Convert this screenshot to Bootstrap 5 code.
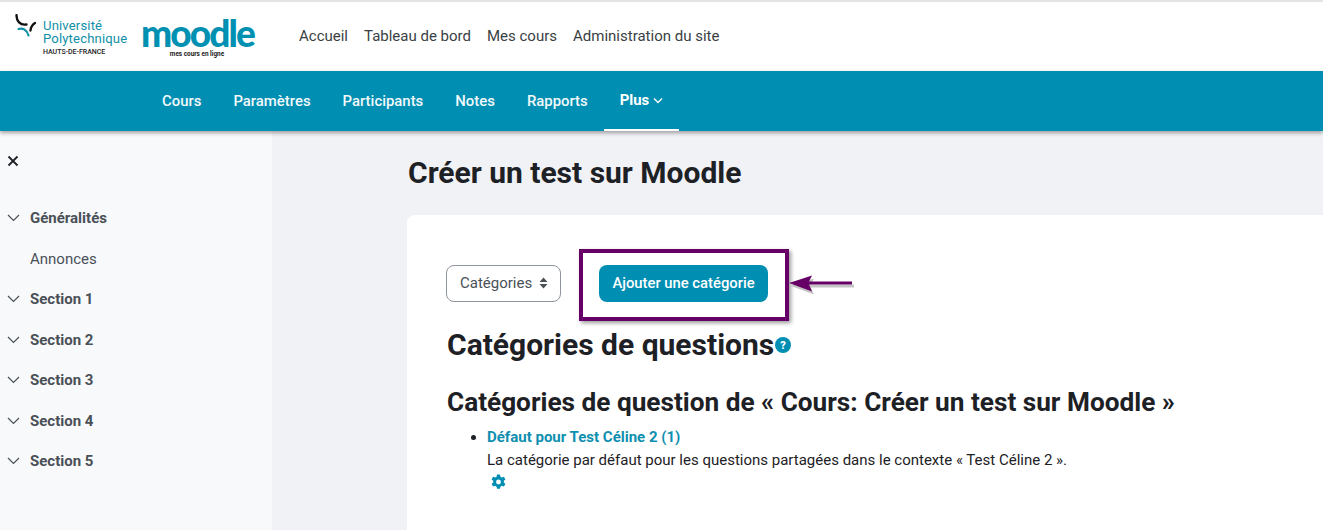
<!DOCTYPE html>
<html lang="fr">
<head>
<meta charset="utf-8">
<title>Créer un test sur Moodle</title>
<link href="https://cdn.jsdelivr.net/npm/bootstrap@5.3.0/dist/css/bootstrap.min.css" rel="stylesheet">
<style>
html,body{height:530px;overflow:hidden}
body{font-family:Roboto,"Liberation Sans",sans-serif;font-size:15px;color:#1d2125;background:#f1f2f6}
.topbar{height:71px;background:#fff;border-top:2px solid #e4e4e4;padding-left:15px}
.logo-uphf{width:113px;height:42px;margin-top:-4px}
.uni-wrap{padding-top:5.500px;margin-left:-2px}
.uni-text{color:#0f8fa8;font-size:13.1px;line-height:13px;letter-spacing:.15px;white-space:nowrap}
.hdf-text{font-size:7px;line-height:8px;color:#222;font-weight:500;margin-top:3px;white-space:nowrap}
.moodle-word{color:#0090b2;font-family:Lato,Roboto,sans-serif;font-weight:900;font-size:37px;line-height:35px;letter-spacing:-1.900px;white-space:nowrap}
.moodle-sub{font-size:6.4px;line-height:7px;color:#222;font-weight:700;margin-top:1px;white-space:nowrap}
.moodle-logo{margin-left:13px;width:112px;margin-top:-1px}
.top-link{color:#3a3f44;font-size:15px;text-decoration:none;margin-right:16px}
.top-links{margin-left:46px}
.secbar{height:60px;background:#008eb2;box-shadow:0 2px 4px rgba(0,0,0,.35);padding-left:146px;position:relative;z-index:2}
.sec-link{color:#fff;font-size:14.900px;font-weight:500;text-decoration:none;padding:0 16px;height:60px;display:flex;align-items:center;opacity:.95}
.sec-active{font-weight:700;border-bottom:2px solid #fff;opacity:1}
.page-main{height:399px}
.side-panel{width:272px;background:#f8f9fb;flex:none;padding-left:7px}
.side-close{margin-top:24px;height:12px;display:block}
.side-list{margin-top:31px}
.side-row{height:40.5px;color:#495057;font-size:15px;font-weight:700}
.side-row svg{margin-right:10px;flex:none}
.side-plain{font-weight:400;padding-left:23px}
.main-col{padding-left:135px;min-width:0;flex:1}
.course-title{font-size:30px;font-weight:700;line-height:36px;margin:24px 0 24px 1px;color:#1d2125}
.white-panel{background:#fff;border-radius:8px 0 0 0;height:330px;padding:50px 0 0 39px;position:relative}
.tool-row{height:36px}
.sel-box{width:115px;height:37px;border:1px solid #8f959e;border-radius:8px;color:#495057;padding-left:13px;font-size:15px}
.sel-caret{margin-left:7px}
.add-btn{background:#008eb2;color:#fff;font-size:14.800px;font-weight:500;border:0;border-radius:8px;height:37px;width:169px;margin-left:38px;padding:0}
.add-btn:hover{background:#008eb2;color:#fff}
.note-box{position:absolute;left:172px;top:34px;width:210px;height:72px;border:4px solid #660066;box-shadow:2px 2px 4px rgba(0,0,0,.4);pointer-events:none}
.note-arrow{position:absolute;left:381px;top:60px;width:68px;height:21px}
.q-title{font-size:30px;font-weight:700;line-height:36px;margin:26px 0 0 1px;color:#1d2125}
.q-help{width:16px;height:16px;vertical-align:2px;margin-left:1px}
.q-sub{font-size:26.2px;font-weight:700;line-height:30px;margin:24px 0 9px 1px;color:#1d2125}
.q-list{margin:0;padding-left:41px;font-size:15px;line-height:23px}
.q-link{color:#0f8fb0;font-weight:700;text-decoration:none}
.gear{width:17px;height:17px;margin:2px 0 0 3px;display:block}
</style>
</head>
<body>
<header class="topbar d-flex align-items-center">
  <div class="d-flex align-items-start logo-uphf">
    <svg width="30" height="34" viewBox="0 0 30 34">
      <path d="M1.500 1C1.500 7 5 11.500 11.500 10.500" fill="none" stroke="#111" stroke-width="2.300" stroke-linecap="round"/>
      <path d="M20 9C17.500 10.500 15.800 13.500 15.500 16.500" fill="none" stroke="#111" stroke-width="2.300" stroke-linecap="round"/>
      <path d="M3.500 15C8 13.500 12 16 13.500 21.500" fill="none" stroke="#0f8fa8" stroke-width="2.200" stroke-linecap="round"/>
    </svg>
    <div class="uni-wrap">
      <div class="uni-text">Université<br>Polytechnique</div>
      <div class="hdf-text">HAUTS-DE-FRANCE</div>
    </div>
  </div>
  <div class="moodle-logo text-center">
    <div class="moodle-word">moodle</div>
    <div class="moodle-sub">mes cours en ligne</div>
  </div>
  <nav class="top-links d-flex">
    <a class="top-link" href="#">Accueil</a>
    <a class="top-link" href="#">Tableau de bord</a>
    <a class="top-link" href="#">Mes cours</a>
    <a class="top-link" href="#">Administration du site</a>
  </nav>
</header>
<nav class="secbar d-flex">
  <a class="sec-link" href="#">Cours</a>
  <a class="sec-link" href="#">Paramètres</a>
  <a class="sec-link" href="#">Participants</a>
  <a class="sec-link" href="#">Notes</a>
  <a class="sec-link" href="#">Rapports</a>
  <a class="sec-link sec-active" href="#">Plus
    <svg class="ms-1" width="10" height="7" viewBox="0 0 10 7"><path d="M1 1.500L5 5.500L9 1.500" fill="none" stroke="#fff" stroke-width="1.300"/></svg>
  </a>
</nav>
<div class="page-main d-flex">
  <aside class="side-panel">
    <svg class="side-close" width="12" height="12" viewBox="0 0 12 12"><path d="M1.500 1.500L10.500 10.500M10.500 1.500L1.500 10.500" stroke="#1d2125" stroke-width="1.800"/></svg>
    <div class="side-list">
      <div class="side-row d-flex align-items-center"><svg width="13" height="8" viewBox="0 0 13 8"><path d="M1 1L6.500 6.500L12 1" fill="none" stroke="#495057" stroke-width="1.200"/></svg>Généralités</div>
      <div class="side-row side-plain d-flex align-items-center">Annonces</div>
      <div class="side-row d-flex align-items-center"><svg width="13" height="8" viewBox="0 0 13 8"><path d="M1 1L6.500 6.500L12 1" fill="none" stroke="#495057" stroke-width="1.200"/></svg>Section 1</div>
      <div class="side-row d-flex align-items-center"><svg width="13" height="8" viewBox="0 0 13 8"><path d="M1 1L6.500 6.500L12 1" fill="none" stroke="#495057" stroke-width="1.200"/></svg>Section 2</div>
      <div class="side-row d-flex align-items-center"><svg width="13" height="8" viewBox="0 0 13 8"><path d="M1 1L6.500 6.500L12 1" fill="none" stroke="#495057" stroke-width="1.200"/></svg>Section 3</div>
      <div class="side-row d-flex align-items-center"><svg width="13" height="8" viewBox="0 0 13 8"><path d="M1 1L6.500 6.500L12 1" fill="none" stroke="#495057" stroke-width="1.200"/></svg>Section 4</div>
      <div class="side-row d-flex align-items-center"><svg width="13" height="8" viewBox="0 0 13 8"><path d="M1 1L6.500 6.500L12 1" fill="none" stroke="#495057" stroke-width="1.200"/></svg>Section 5</div>
    </div>
  </aside>
  <main class="main-col">
    <h1 class="course-title">Créer un test sur Moodle</h1>
    <section class="white-panel">
      <div class="tool-row d-flex align-items-center">
        <div class="sel-box d-flex align-items-center">Catégories
          <svg class="sel-caret" width="9" height="12" viewBox="0 0 9 12"><path d="M4.500 0.500L8.500 5H0.500ZM4.500 11.500L0.500 7H8.500Z" fill="#495057"/></svg>
        </div>
        <button class="btn add-btn" type="button">Ajouter une catégorie</button>
      </div>
      <div class="note-box"></div>
      <svg class="note-arrow" viewBox="0 0 68 21">
        <path d="M3 11L26 3.500L23 9.500H66V12.500H23L26 19.500Z" fill="#555" fill-opacity=".35"/>
        <path d="M1 8L24 0.500L21 6.600H64V9.400H21L24 16.500Z" fill="#660066"/>
      </svg>
      <h2 class="q-title">Catégories de questions<svg class="q-help" viewBox="0 0 16 16"><circle cx="8" cy="8" r="8" fill="#008eb2"/><text x="8" y="12" text-anchor="middle" font-family="Roboto" font-weight="900" font-size="11" fill="#fff">?</text></svg></h2>
      <h3 class="q-sub">Catégories de question de « Cours: Créer un test sur Moodle »</h3>
      <ul class="q-list">
        <li><a class="q-link" href="#">Défaut pour Test Céline 2 (1)</a><br>La catégorie par défaut pour les questions partagées dans le contexte « Test Céline 2 ».
          <svg class="gear" viewBox="0 0 16 16"><path fill="#008eb2" fill-rule="evenodd" d="M6.600.5h2.800l.4 2 1.400.8 1.900-.7 1.400 2.500-1.500 1.300v1.600l1.500 1.300-1.400 2.500-1.900-.7-1.400.8-.4 2H6.600l-.4-2-1.400-.8-1.900.7L1.500 9.300 3 8V6.400L1.500 5.100l1.400-2.500 1.900.7 1.400-.8zM8 5.200a2.300 2.300 0 1 0 0 4.600 2.300 2.300 0 0 0 0-4.600z"/></svg>
        </li>
      </ul>
    </section>
  </main>
</div>
<script src="https://cdn.jsdelivr.net/npm/bootstrap@5.3.0/dist/js/bootstrap.bundle.min.js"></script>
</body>
</html>
